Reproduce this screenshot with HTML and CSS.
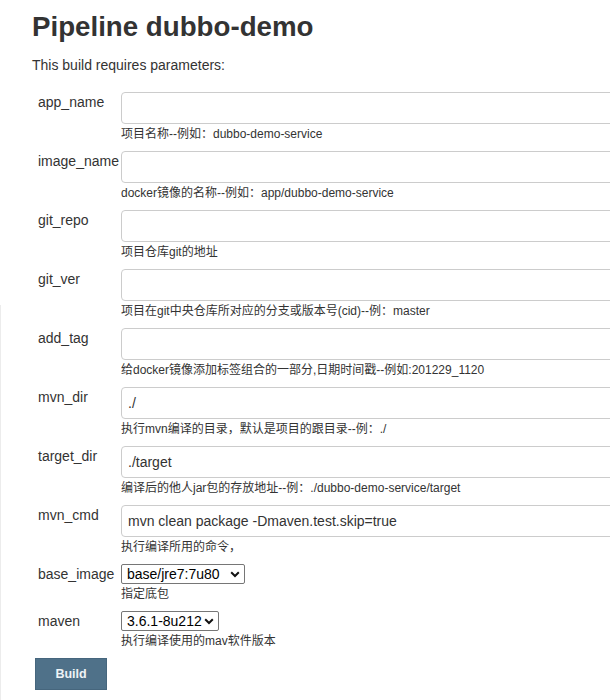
FILE: index.html
```html
<!DOCTYPE html>
<html lang="zh-CN">
<head>
<meta charset="utf-8">
<title>Pipeline dubbo-demo</title>
<link rel="stylesheet" href="styles.css">
</head>
<body>
<div class="edge"></div>
<main class="page">
  <h1 class="title">Pipeline dubbo-demo</h1>
  <p class="intro">This build requires parameters:</p>
  <form class="params">
    <div class="row">
      <label class="name">app_name</label>
      <div class="value">
        <input class="text" type="text" value="">
        <div class="desc">项目名称--例如：dubbo-demo-service</div>
      </div>
    </div>
    <div class="row">
      <label class="name">image_name</label>
      <div class="value">
        <input class="text" type="text" value="">
        <div class="desc">docker镜像的名称--例如：app/dubbo-demo-service</div>
      </div>
    </div>
    <div class="row">
      <label class="name">git_repo</label>
      <div class="value">
        <input class="text" type="text" value="">
        <div class="desc">项目仓库git的地址</div>
      </div>
    </div>
    <div class="row">
      <label class="name">git_ver</label>
      <div class="value">
        <input class="text" type="text" value="">
        <div class="desc">项目在git中央仓库所对应的分支或版本号(cid)--例：master</div>
      </div>
    </div>
    <div class="row">
      <label class="name">add_tag</label>
      <div class="value">
        <input class="text" type="text" value="">
        <div class="desc">给docker镜像添加标签组合的一部分,日期时间戳--例如:201229_1120</div>
      </div>
    </div>
    <div class="row">
      <label class="name">mvn_dir</label>
      <div class="value">
        <input class="text" type="text" value="./">
        <div class="desc">执行mvn编译的目录，默认是项目的跟目录--例：./</div>
      </div>
    </div>
    <div class="row">
      <label class="name">target_dir</label>
      <div class="value">
        <input class="text" type="text" value="./target">
        <div class="desc">编译后的他人jar包的存放地址--例：./dubbo-demo-service/target</div>
      </div>
    </div>
    <div class="row">
      <label class="name">mvn_cmd</label>
      <div class="value">
        <input class="text" type="text" value="mvn clean package -Dmaven.test.skip=true">
        <div class="desc">执行编译所用的命令，</div>
      </div>
    </div>
    <div class="row">
      <label class="name">base_image</label>
      <div class="value">
        <span class="select-wrap">
          <select class="choice choice-wide">
            <option>base/jre7:7u80</option>
            <option>base/jre8:8u112</option>
          </select>
          <svg class="chevron" width="10" height="7" viewBox="0 0 10 7" aria-hidden="true"><path d="M1.2 1.3 L5 5 L8.8 1.3" fill="none" stroke="#111" stroke-width="2"/></svg>
        </span>
        <div class="desc">指定底包</div>
      </div>
    </div>
    <div class="row">
      <label class="name">maven</label>
      <div class="value">
        <span class="select-wrap">
          <select class="choice choice-narrow">
            <option>3.6.1-8u212</option>
          </select>
          <svg class="chevron" width="10" height="7" viewBox="0 0 10 7" aria-hidden="true"><path d="M1.2 1.3 L5 5 L8.8 1.3" fill="none" stroke="#111" stroke-width="2"/></svg>
        </span>
        <div class="desc">执行编译使用的mav软件版本</div>
      </div>
    </div>
    <button class="build" type="button">Build</button>
  </form>
</main>
</body>
</html>
```

FILE: styles.css
```css
html {
  overflow: hidden;
}

body {
  margin: 0;
  background: #ffffff;
  color: #333333;
  font-family: "Liberation Sans", Arial, "Noto Sans CJK SC", sans-serif;
  font-size: 14px;
}

.edge {
  position: absolute;
  left: 0;
  top: 305px;
  width: 1px;
  height: 400px;
  background: #ececec;
}

.page {
  width: 578px;
  overflow: hidden;
  padding: 11px 0 0 32px;
}

.title {
  margin: 0;
  font-size: 27.7px;
  line-height: 32px;
  font-weight: bold;
  color: #333333;
}

.intro {
  margin: 12px 0 0;
  line-height: 20px;
}

.params {
  margin-top: 17px;
}

.row {
  display: grid;
  grid-template-columns: 83px 1fr;
  margin-left: 6px;
  margin-bottom: 8px;
}

.name {
  line-height: 20px;
  white-space: nowrap;
}

.value {
  display: flex;
  flex-direction: column;
  align-items: flex-start;
  overflow: hidden;
}

.text {
  box-sizing: border-box;
  width: calc(100% + 40px);
  height: 32px;
  margin: 0;
  padding: 0 6px;
  border: 1px solid #cccccc;
  border-radius: 4px;
  font-family: "Liberation Sans", Arial, sans-serif;
  font-size: 14px;
  color: #333333;
  background: #ffffff;
}

.desc {
  margin-top: 2px;
  line-height: 17px;
  font-size: 12px;
  color: #333333;
  white-space: nowrap;
}

.select-wrap {
  position: relative;
  display: block;
  height: 20px;
}

.choice {
  -webkit-appearance: none;
  appearance: none;
  box-sizing: border-box;
  height: 20px;
  margin: 0;
  padding: 0 0 0 5px;
  border: 1px solid #767676;
  border-radius: 2px;
  font-family: "Liberation Sans", Arial, sans-serif;
  font-size: 14px;
  line-height: 18px;
  color: #000000;
  background: #ffffff;
}

.choice-wide {
  width: 124px;
}

.choice-narrow {
  width: 98px;
}

.chevron {
  position: absolute;
  right: 5px;
  top: 7px;
  pointer-events: none;
}

.build {
  display: block;
  margin: 6px 0 0 3px;
  width: 72px;
  height: 32px;
  border: 1px solid #46667d;
  background: #4f7189;
  color: #eef3f6;
  font-family: "Liberation Sans", Arial, sans-serif;
  font-size: 12.5px;
  font-weight: bold;
}
```
